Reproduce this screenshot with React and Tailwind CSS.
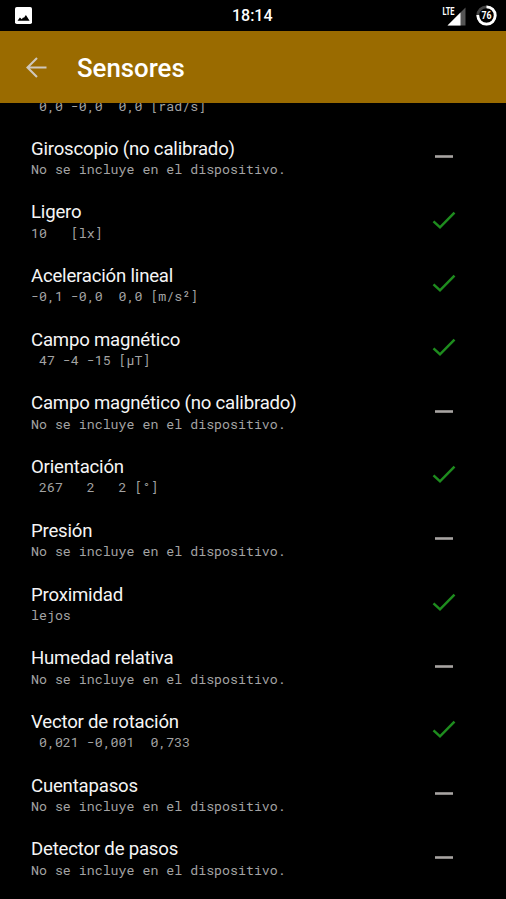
import React from 'react';

const NOT_INCLUDED = 'No se incluye en el dispositivo.';

const sensors = [
  { name: 'Giroscopio (no calibrado)', value: NOT_INCLUDED, available: false },
  { name: 'Ligero', value: '10   [lx]', available: true },
  { name: 'Aceleración lineal', value: '-0,1 -0,0  0,0 [m/s²]', available: true },
  { name: 'Campo magnético', value: ' 47 -4 -15 [µT]', available: true },
  { name: 'Campo magnético (no calibrado)', value: NOT_INCLUDED, available: false },
  { name: 'Orientación', value: ' 267   2   2 [°]', available: true },
  { name: 'Presión', value: NOT_INCLUDED, available: false },
  { name: 'Proximidad', value: 'lejos', available: true },
  { name: 'Humedad relativa', value: NOT_INCLUDED, available: false },
  { name: 'Vector de rotación', value: ' 0,021 -0,001  0,733', available: true },
  { name: 'Cuentapasos', value: NOT_INCLUDED, available: false },
  { name: 'Detector de pasos', value: NOT_INCLUDED, available: false },
];

const StatusBar = () => (
  <div className="grid h-[31px] shrink-0 grid-cols-[1fr_auto_1fr] items-center pr-[9.5px] pl-[15px] text-white">
    <svg width="17" height="17" viewBox="0 0 17 17">
      <rect width="17" height="17" rx="1.8" fill="#fff" />
      <path d="M2.5 13.8 4.9 10.6 6.8 12.3 8.2 10.3 8.8 11 10.9 8 14.6 13.8Z" fill="#000" />
    </svg>
    <span className="mr-[7px] pt-px text-center text-[16px] leading-none font-medium">18:14</span>
    <div className="flex items-center justify-end gap-[9px]">
      <svg className="overflow-visible" width="25" height="20" viewBox="0 0 25 20">
        <path d="M5.5 19.5 23.5 1.5V19.5Z" fill="#555" />
        <path d="M5.5 19.5 18.5 6.5V19.5Z" fill="#fff" />
        <path d="M0 0H12.8V9.8H0Z" fill="#000" />
        <text
          x="0.5"
          y="9"
          fill="#fff"
          fontSize="11.5"
          fontWeight="700"
          textLength="12"
          lengthAdjust="spacingAndGlyphs"
        >
          LTE
        </text>
      </svg>
      <svg width="21" height="21" viewBox="0 0 21 21">
        <circle cx="10.5" cy="10.5" r="8.7" fill="none" stroke="#444" strokeWidth="2.8" />
        <circle
          cx="10.5"
          cy="10.5"
          r="8.7"
          fill="none"
          stroke="#fff"
          strokeWidth="2.8"
          pathLength="100"
          strokeDasharray="76 24"
          transform="rotate(-90 10.5 10.5)"
        />
        <text
          x="10.5"
          y="14.2"
          fill="#fff"
          fontSize="10.5"
          fontWeight="700"
          textAnchor="middle"
          textLength="10"
          lengthAdjust="spacingAndGlyphs"
        >
          76
        </text>
      </svg>
    </div>
  </div>
);

const StatusIcon = ({ available }) => (
  <svg className="mb-[4.6px] shrink-0" width="24" height="20" viewBox="0 0 24 20">
    {available ? (
      <path d="M1.5 11.3 8 17.3 22.5 2.7" fill="none" stroke="#1e8c1e" strokeWidth="2.5" />
    ) : (
      <path d="M3 10.5H21" stroke="#a8a4a2" strokeWidth="2.6" />
    )}
  </svg>
);

const SensorValue = ({ children }) => (
  <p className="font-['Roboto_Mono','DejaVu_Sans_Mono',monospace] text-[13.27px] leading-[20px] whitespace-pre text-[#a3a3a3]">
    {children}
  </p>
);

const SensorRow = ({ sensor }) => (
  <li className="flex h-[63.7px] shrink-0 items-center justify-between pr-[50px] pl-[31px]">
    <div>
      <p className="-mb-[0.7px] text-[18.6px] leading-[22px] tracking-[-0.2px] text-[#f5f5f5]">{sensor.name}</p>
      <SensorValue>{sensor.value}</SensorValue>
    </div>
    <StatusIcon available={sensor.available} />
  </li>
);

const App = () => {
  return (
    <div className="flex h-[899px] w-[506px] flex-col overflow-hidden bg-black font-[Roboto,sans-serif]">
      <StatusBar />
      <header className="flex h-[72px] shrink-0 items-center bg-[#9a6b00] pl-[26px]">
        <svg width="21" height="21" viewBox="0 0 21 21" fill="none" stroke="#cfc8bc" strokeWidth="2.1">
          <path d="M20.5 10.5H2M11 1 1.5 10.5 11 20" />
        </svg>
        <h1 className="mt-[3px] ml-[30px] text-[25.8px] leading-none font-medium text-white">Sensores</h1>
      </header>
      <main className="min-h-0 flex-1 overflow-hidden">
        {/* values of the sensor scrolled under the toolbar */}
        <div className="-mt-[7.5px] h-[31px] pl-[31px]">
          <SensorValue>{' 0,0 -0,0  0,0 [rad/s]'}</SensorValue>
        </div>
        <ul className="flex flex-col">
          {sensors.map((sensor) => (
            <SensorRow key={sensor.name} sensor={sensor} />
          ))}
        </ul>
      </main>
    </div>
  );
};

export default App;
